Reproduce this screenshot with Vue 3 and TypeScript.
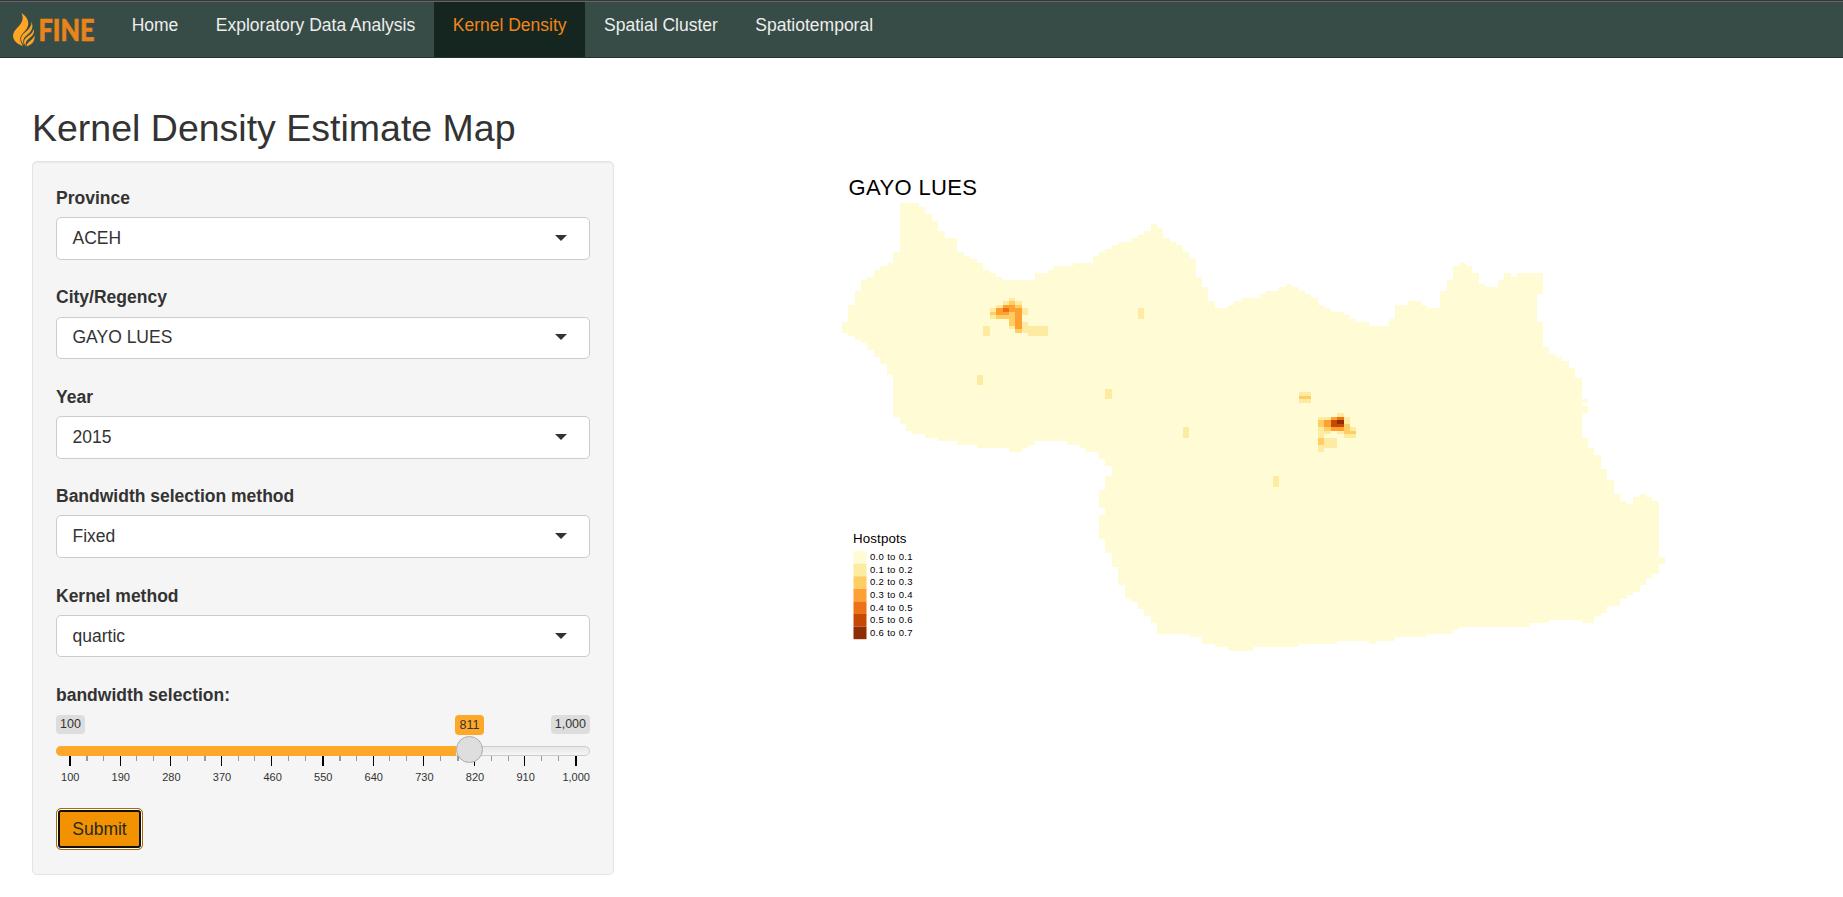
<script setup lang="ts">
interface Field {
  label: string
  value: string
}

const tabs: string[] = ['Home', 'Exploratory Data Analysis', 'Kernel Density', 'Spatial Cluster', 'Spatiotemporal']
const activeTab = 'Kernel Density'

const fields: Field[] = [
  { label: 'Province', value: 'ACEH' },
  { label: 'City/Regency', value: 'GAYO LUES' },
  { label: 'Year', value: '2015' },
  { label: 'Bandwidth selection method', value: 'Fixed' },
  { label: 'Kernel method', value: 'quartic' },
]

const scaleLabels: string[] = ['100', '190', '280', '370', '460', '550', '640', '730', '820', '910', '1,000']
const ticks = Array.from({ length: 31 }, (_, i) => ({
  x: Math.floor(13.4 + i * 16.87),
  major: i % 3 === 0,
  wide: i % 15 === 0 || i === 1 || i === 8 || i === 16 || i === 23,
}))

const palette: string[] = ['#fffbd5', '#feeba2', '#fece65', '#fea130', '#ee7215', '#c54803', '#8e2d06']
const legend: string[] = ['0.0 to 0.1', '0.1 to 0.2', '0.2 to 0.3', '0.3 to 0.4', '0.4 to 0.5', '0.5 to 0.6', '0.6 to 0.7']

// Raster boundary of the regency
const region =
  'M842 322H848V305H855V291H861V280H867V277H874V270H880V266H887V263H893V252H900V203H919V207H925V214H932V221H938V231H945V238H957V252H964V256H970V259H977V263H983V270H990V273H996V277H1003V280H1035V273H1048V270H1054V266H1073V263H1093V256H1099V252H1105V249H1112V245H1118V242H1131V238H1138V235H1144V231H1151V224H1157V228H1163V238H1170V242H1176V245H1183V252H1189V259H1196V277H1202V287H1208V301H1215V308H1228V305H1234V301H1241V298H1260V294H1266V291H1279V287H1286V284H1292V287H1299V291H1305V294H1311V298H1318V305H1324V308H1331V312H1344V315H1350V319H1356V322H1369V326H1389V319H1395V305H1408V301H1421V305H1427V308H1440V291H1447V280H1453V266H1459V263H1466V266H1472V273H1479V284H1485V287H1498V280H1504V273H1511V277H1517V273H1543V294H1537V322H1543V347H1549V354H1556V357H1562V361H1569V368H1575V378H1582V399H1588V403H1582V406H1588V413H1582V438H1588V448H1594V455H1601V469H1607V480H1614V494H1620V501H1627V504H1633V497H1640V494H1646V497H1652V501H1659V557H1665V564H1659V574H1652V578H1646V585H1640V592H1633V595H1627V599H1620V606H1607V613H1601V616H1594V623H1582V620H1549V623H1530V627H1459V630H1453V634H1427V637H1395V641H1376V644H1369V641H1337V644H1299V647H1253V651H1228V647H1215V644H1202V637H1189V634H1157V623H1151V616H1144V609H1138V602H1131V599H1125V585H1118V567H1112V553H1105V539H1099V515H1105V508H1099V490H1105V476H1112V466H1105V459H1099V452H1086V448H1080V445H1067V441H1035V445H1028V448H1022V452H1009V448H977V445H957V441H938V438H925V434H912V431H906V424H900V417H893V375H887V364H880V357H874V350H867V343H861V340H855V336H848V333H842Z'

// Raised cells: left, top, right, bottom, density class
const cells: number[][] = [
  [1009, 298, 1015, 301, 1], [1003, 301, 1009, 305, 1], [1009, 301, 1015, 305, 2], [1015, 301, 1022, 305, 1],
  [996, 305, 1003, 308, 1], [1003, 305, 1015, 308, 3], [1015, 305, 1022, 308, 2],
  [990, 308, 996, 312, 1], [996, 308, 1003, 312, 3], [1003, 308, 1009, 312, 4], [1009, 308, 1022, 312, 3], [1022, 308, 1028, 315, 1],
  [990, 312, 996, 315, 2], [996, 312, 1009, 315, 3], [1009, 312, 1015, 315, 2], [1015, 312, 1022, 329, 3],
  [990, 315, 996, 319, 1], [996, 315, 1015, 319, 2], [1009, 319, 1015, 326, 2], [1022, 322, 1028, 326, 1],
  [1009, 326, 1015, 329, 1], [1022, 326, 1048, 333, 1], [1015, 329, 1022, 333, 2], [1028, 333, 1048, 336, 1],
  [983, 326, 990, 336, 1], [977, 375, 983, 385, 1], [1138, 308, 1144, 319, 1], [1105, 389, 1112, 399, 1],
  [1183, 427, 1189, 438, 1], [1273, 476, 1279, 487, 1], [1299, 392, 1311, 403, 1], [1299, 396, 1311, 399, 2],
  [1337, 413, 1344, 417, 1], [1318, 417, 1331, 420, 1], [1331, 417, 1337, 420, 3], [1337, 417, 1344, 420, 4], [1344, 417, 1350, 424, 1],
  [1318, 420, 1324, 427, 2], [1324, 420, 1331, 427, 3], [1331, 420, 1337, 427, 5], [1337, 420, 1344, 424, 6], [1337, 424, 1344, 427, 5],
  [1344, 424, 1350, 431, 2], [1318, 427, 1324, 431, 1], [1324, 427, 1331, 431, 2], [1331, 427, 1344, 431, 3], [1350, 427, 1356, 431, 1],
  [1318, 431, 1331, 434, 1], [1337, 431, 1344, 434, 1], [1344, 431, 1356, 434, 2], [1318, 434, 1324, 438, 1], [1344, 434, 1356, 438, 1],
  [1318, 438, 1324, 445, 2], [1324, 438, 1337, 448, 1], [1318, 445, 1324, 452, 1],
]
</script>

<template>
  <div class="page">
    <nav class="navbar">
      <svg class="brand" width="92" height="46" viewBox="10 7 92 46" role="img" aria-label="FINE">
        <g fill="#fea524">
          <path d="M21.500 13C29 18 30.500 25 25 31C20 36 18.500 39 23 46C15.500 44 11 38 14 32C18 26 25.500 22 21.500 13Z" />
          <path d="M31.500 21.500C34 28 31 32 27 35C23 38 22.500 41 24 45C19.500 40 20.500 36 25 32.500C29 29 32 26 31.500 21.500Z" />
          <path d="M34 29C34.500 34 32 36 29 38.500C26 41 25 43 26 46C23 43 23.500 39.500 27.500 36.500C31 34 33 32 34 29Z" />
          <path d="M34.700 35.500C35 42 31 45 26.500 46.500C26.500 42 32 41 34.700 35.500Z" />
        </g>
        <text class="wordmark" x="38.500" y="40.500" textLength="56" lengthAdjust="spacingAndGlyphs">FINE</text>
      </svg>
      <a v-for="tab in tabs" :key="tab" class="tab" :class="{ active: tab === activeTab }">{{ tab }}</a>
    </nav>

    <main class="content">
      <h2>Kernel Density Estimate Map</h2>
      <div class="columns">
        <form class="well" @submit.prevent>
          <div v-for="field in fields" :key="field.label" class="group">
            <label>{{ field.label }}</label>
            <div class="select">
              <span>{{ field.value }}</span>
              <i class="caret"></i>
            </div>
          </div>

          <label class="slider-label">bandwidth selection:</label>
          <div class="slider">
            <div class="bounds">
              <span class="bound">100</span>
              <span class="bound">1,000</span>
            </div>
            <div class="track"><div class="fill"></div></div>
            <span class="current">811</span>
            <svg class="scale" width="534" height="32" viewBox="0 0 534 32">
              <rect
                v-for="tick in ticks"
                :key="tick.x"
                :x="tick.x"
                y="0"
                :width="tick.wide ? 2 : 1"
                :height="tick.major ? 10 : 5"
                :fill="tick.major ? '#000' : '#999'"
              />
              <text v-for="(label, i) in scaleLabels" :key="label" :x="14.2 + i * 50.6" y="25">{{ label }}</text>
            </svg>
            <i class="handle"></i>
          </div>

          <button class="submit" type="submit">Submit</button>
        </form>

        <svg class="map" width="850" height="500" viewBox="830 161 850 500">
          <text class="map-title" x="848.500" y="194.500" textLength="128.500">GAYO LUES</text>
          <g shape-rendering="crispEdges">
            <path :d="region" :fill="palette[0]" />
            <rect
              v-for="(c, i) in cells"
              :key="i"
              :x="c[0]"
              :y="c[1]"
              :width="c[2] - c[0]"
              :height="c[3] - c[1]"
              :fill="palette[c[4]]"
            />
          </g>
          <text class="legend-title" x="853" y="543" textLength="53.500">Hostpots</text>
          <g v-for="(item, i) in legend" :key="item">
            <rect x="853.500" :y="551 + i * 12.6" width="13" height="12.600" :fill="palette[i]" />
            <text class="legend-label" x="870" :y="560 + i * 12.65" textLength="42.500">{{ item }}</text>
          </g>
        </svg>
      </div>
    </main>
  </div>
</template>

<style>
body {
  margin: 0;
  background: #fff;
}
</style>

<style scoped>
.page {
  height: 897px;
  overflow: hidden;
  font: 17.5px/25px 'Liberation Sans', Arial, sans-serif;
  color: #333;
}

.navbar {
  display: flex;
  box-sizing: border-box;
  height: 58px;
  border-top: 1px solid #38353a;
  border-bottom: 1px solid #24332f;
  background: #374c46;
  box-shadow: inset 0 1px #646668;
}

.brand {
  flex: none;
  overflow: visible;
  margin: 6px 10.900px 0 10px;
}

.wordmark {
  font: 900 30px Lato, sans-serif;
  fill: #e8841a;
  stroke: #e8841a;
  stroke-width: 0.6px;
}

.tab {
  margin-top: 1px;
  padding: 11px 18.750px 0;
  color: #eee;
  white-space: nowrap;
}

.tab.active {
  background: #152520;
  color: #f08519;
}

.content {
  padding: 49px 32px 0;
}

h2 {
  margin: 0 0 12px;
  font-size: 37.5px;
  font-weight: 400;
  line-height: 42px;
}

.columns {
  display: flex;
  align-items: flex-start;
}

.well {
  box-sizing: border-box;
  flex: none;
  width: 582px;
  height: 714px;
  padding: 24px 23px 22px;
  border: 1px solid #e3e3e3;
  border-radius: 5px;
  background: #f5f5f5;
  box-shadow: inset 0 1px 1px rgba(0, 0, 0, 0.05);
}

.group {
  height: 99.400px;
}

label {
  display: block;
  margin-bottom: 6.300px;
  font-weight: 700;
}

.select {
  display: flex;
  align-items: center;
  justify-content: space-between;
  box-sizing: border-box;
  height: 42.500px;
  padding: 0 22.500px 0 15.500px;
  border: 1px solid #ccc;
  border-radius: 5px;
  background: #fff;
}

.caret {
  width: 0;
  height: 0;
  margin-bottom: 1px;
  border: 6px solid transparent;
  border-top-color: #333;
  border-bottom: 0;
}

.slider-label {
  margin-bottom: 7px;
}

.slider {
  position: relative;
  height: 93px;
}

.bounds {
  display: flex;
  justify-content: space-between;
}

.bound {
  height: 19px;
  padding: 0 4px;
  border-radius: 4px;
  background: #ddd;
  font-size: 12.500px;
  line-height: 18px;
}

.track {
  box-sizing: border-box;
  height: 10px;
  margin-top: 12px;
  border: 1px solid #ccc;
  border-radius: 10px;
  background: linear-gradient(#dedede -50%, #fff 150%) border-box;
}

.fill {
  width: 400px;
  height: 10px;
  margin: -1px 0 0 -1px;
  border-radius: 10px 0 0 10px;
  background: #fea829;
}

.current {
  position: absolute;
  top: 0;
  left: 399px;
  width: 29px;
  height: 20px;
  border-radius: 4px;
  background: #fea829;
  font-size: 12.500px;
  line-height: 20px;
  text-align: center;
}

.scale {
  display: block;
}

.scale text {
  fill: #333;
  font-size: 11px;
  text-anchor: middle;
}

.handle {
  position: absolute;
  top: 21px;
  left: 400px;
  box-sizing: border-box;
  width: 27px;
  height: 27px;
  border: 1px solid #ababab;
  border-radius: 50%;
  background: #dedede;
}

.submit {
  display: block;
  width: 87px;
  height: 42px;
  padding: 1px 0 0;
  border: 1px solid #ad6704;
  border-radius: 5px;
  background: #f39200;
  box-shadow: inset 0 0 0 1px #fff, inset 0 0 0 3px #101010;
  color: #222b20;
  font: inherit;
}

.map {
  display: block;
  flex: none;
  margin-left: 216px;
  font-family: 'Liberation Sans', Arial, sans-serif;
  fill: #000;
}

.map-title {
  font-size: 22px;
}

.legend-title {
  font-size: 13.300px;
}

.legend-label {
  font-size: 9.500px;
}
</style>
